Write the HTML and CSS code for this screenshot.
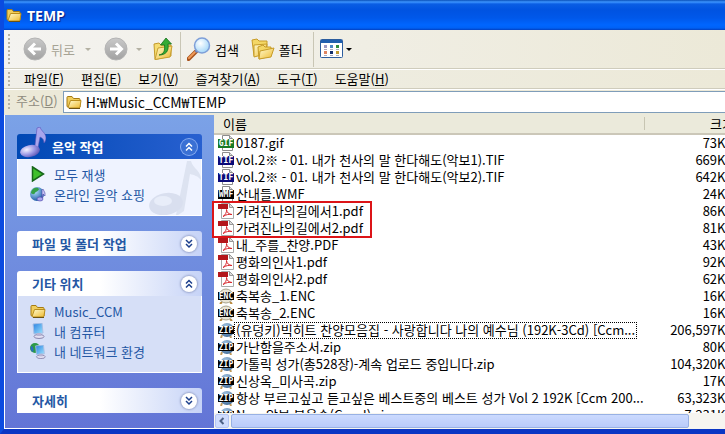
FILE: index.html
```
<!DOCTYPE html>
<html lang="ko">

<head>
    <meta charset="UTF-8">
    <meta name="viewport" content="width=device-width, initial-scale=1.0">
    <title>TEMP</title>
    <link rel="stylesheet" href="styles.css">
</head>

<body>
    <!-- icons -->
    <svg class="defs" width="0" height="0">
        <defs>
            <linearGradient id="gold" x1="0" y1="0" x2="1" y2="1">
                <stop offset="0" stop-color="#fffbd0" />
                <stop offset="1" stop-color="#eeb92e" />
            </linearGradient>
            <linearGradient id="screen" x1="0" y1="0" x2="1" y2="1">
                <stop offset="0" stop-color="#2a7fe0" />
                <stop offset="1" stop-color="#9be4ff" />
            </linearGradient>
            <radialGradient id="globe" cx=".35" cy=".3" r=".8">
                <stop offset="0" stop-color="#b8e4ff" />
                <stop offset="1" stop-color="#0c4c9c" />
            </radialGradient>
            <radialGradient id="zipball" cx=".4" cy=".3" r=".8">
                <stop offset="0" stop-color="#a9cbe8" />
                <stop offset="1" stop-color="#3a6592" />
            </radialGradient>
            <linearGradient id="gray" x1="0" y1="0" x2="0" y2="1">
                <stop offset="0" stop-color="#c9c9c9" />
                <stop offset="1" stop-color="#a2a2a2" />
            </linearGradient>
            <radialGradient id="lens" cx=".4" cy=".35" r=".7">
                <stop offset="0" stop-color="#ffffff" />
                <stop offset="1" stop-color="#9fd5f8" />
            </radialGradient>
            <radialGradient id="notehead" cx=".35" cy=".35" r=".8">
                <stop offset="0" stop-color="#f4f2ff" />
                <stop offset=".5" stop-color="#9c98e4" />
                <stop offset="1" stop-color="#4b45a8" />
            </radialGradient>
            <symbol id="folder" viewBox="0 0 16 16">
                <path d="M1 3.500Q1 2.500 2 2.500h4l1.500 2H13q1 0 1 1V13H2q-1 0-1-1z" fill="#f0cd5c" stroke="#a67b12" />
                <path d="M4.500 6.500H15L14 13q-.2 1-1 1H3q-1 0-.800-1z" fill="url(#gold)" stroke="#b98d1c" />
                <path d="M3 14.500h11" stroke="#6d5212" stroke-width="1" />
            </symbol>
            <symbol id="page" viewBox="0 0 16 16">
                <path d="M4.500.5h7l3 3v12h-10z" fill="#fff" stroke="#8c8c8c" />
                <path d="M11.500.5v3h3" fill="#ddd" stroke="#8c8c8c" />
            </symbol>
            <symbol id="gif" viewBox="0 0 16 16">
                <use href="#page" />
                <rect y="4" width="16" height="9" fill="#187a24" />
                <text x="8" y="11" class="tag">GIF</text>
            </symbol>
            <symbol id="tif" viewBox="0 0 16 16">
                <use href="#page" />
                <rect y="4" width="16" height="9" fill="#0a0a78" />
                <text x="8" y="11" class="tag">TIF</text>
            </symbol>
            <symbol id="wmf" viewBox="0 0 16 16">
                <use href="#page" />
                <rect y="4" width="16" height="9" fill="#000" />
                <text x="8" y="11" class="tag">WMF</text>
            </symbol>
            <symbol id="pdf" viewBox="0 0 16 16">
                <path d="M3.500.5h8l4 4v11h-12z" fill="#fff" stroke="#a9a9a9" />
                <path d="M11.500.5v4h4z" fill="#ddd" stroke="#999" />
                <rect y="1" width="10" height="5" fill="#b3161b" />
                <path d="M5 13.500c2-1 4-4.500 3.500-7 .3 3 2.500 5 5.500 5-3-.5-6 0-9 2z" fill="none" stroke="#d8262c" />
            </symbol>
            <symbol id="enc" viewBox="0 0 16 16">
                <path d="M4 14l-2 2M12 14l2 2" stroke="#b8873a" stroke-width="2" />
                <circle cx="8" cy="8" r="7" fill="#e9e4d4" stroke="#aaa48e" />
                <rect y="4" width="16" height="8" fill="#000" />
                <text x="8" y="11" class="tag">ENC</text>
            </symbol>
            <symbol id="zip" viewBox="0 0 16 16">
                <path d="M4 13l-1 3M12 13l1 3" stroke="#c29a5a" stroke-width="2" />
                <circle cx="9" cy="8" r="7" fill="url(#zipball)" />
                <rect y="4" width="16" height="8" fill="#000" />
                <text x="8" y="11" class="tag">ZIP</text>
            </symbol>
            <symbol id="down" viewBox="0 0 16 16">
                <path d="M5 4l3 3 3-3M5 8l3 3 3-3" fill="none" stroke="currentColor" stroke-width="1.500" />
            </symbol>
            <symbol id="up" viewBox="0 0 16 16">
                <path d="M5 7.500l3-3 3 3M5 11.500l3-3 3 3" fill="none" stroke="currentColor" stroke-width="1.500" />
            </symbol>
            <symbol id="note" viewBox="0 0 26 31">
                <path d="M17 1l3-1c1 4 6 6 6 11 0 2-1 4-2 5 0-4-2-5-4-6l-3 16-3 1z" fill="#a9a5ec" stroke="#5a54b8" stroke-width=".6" />
                <ellipse cx="10" cy="24" rx="10" ry="6" transform="rotate(-12 10 24)" fill="url(#notehead)" />
            </symbol>
            <symbol id="pc" viewBox="0 0 16 16">
                <path d="M3 1l9-1 1 10-9 1z" fill="url(#screen)" stroke="#a9bfe4" />
                <ellipse cx="9" cy="13.500" rx="5" ry="2" fill="#e3e1f4" stroke="#74709c" stroke-width=".8" />
                <path d="M7 10h4v3H7z" fill="#b7b4d4" />
            </symbol>
        </defs>
    </svg>

    <div class="window">
        <header class="title">
            <svg class="icon"><use href="#folder" /></svg>
            <h1>TEMP</h1>
        </header>

        <div class="toolbar">
            <i class="grip"></i>
            <button class="back" disabled>
                <svg width="24" height="24" viewBox="0 0 24 24">
                    <circle cx="12" cy="12" r="11" fill="url(#gray)" stroke="#b4b4b4" />
                    <path d="M18 12H7M12 6.500L6.500 12l5.500 5.500" fill="none" stroke="#fff" stroke-width="3" />
                </svg>
                뒤로
            </button>
            <i class="caret off"></i>
            <button class="next" disabled aria-label="앞으로">
                <svg width="24" height="24" viewBox="0 0 24 24">
                    <circle cx="12" cy="12" r="11" fill="url(#gray)" stroke="#b4b4b4" />
                    <path d="M6 12h11M12 6.500l5.500 5.500-5.500 5.500" fill="none" stroke="#fff" stroke-width="3" />
                </svg>
            </button>
            <i class="caret off"></i>
            <button class="parent" aria-label="위로">
                <svg width="20" height="24" viewBox="0 0 20 24">
                    <path d="M1 7l5-1 2 2h10v11L2 22.500z" fill="#f5dc72" stroke="#c39a2c" />
                    <path d="M5 11l14-2-2 11-15 2.500z" fill="url(#gold)" stroke="#c9a030" />
                    <path d="M6 18c5-1 6-4 5.500-10H7.500L13 1l5.500 6H15c1 7-2 11-9 11z" fill="#35ab35" stroke="#13701a" stroke-width=".8" />
                </svg>
            </button>
            <i class="line"></i>
            <button class="search">
                <svg width="24" height="24" viewBox="0 0 24 24">
                    <path d="M1.500 22L9 14.500" stroke="#a8521c" stroke-width="4" stroke-linecap="round" />
                    <path d="M2 21l6-6" stroke="#ef9a58" stroke-width="2" stroke-linecap="round" />
                    <path d="M8.500 15l2-2" stroke="#6d7fb0" stroke-width="3" />
                    <circle cx="15" cy="8.500" r="7.500" fill="url(#lens)" stroke="#7f9fd8" stroke-width="1.500" />
                </svg>
                검색
            </button>
            <button class="folders">
                <svg width="24" height="24" viewBox="0 0 24 24">
                    <path d="M1 3l5-1 2 2h8v12l-13 3z" fill="#f4d765" stroke="#c79c28" />
                    <path d="M3 8l13-1-2 10-11 3z" fill="url(#gold)" stroke="#c79c28" />
                    <path d="M7 10l5-2 2 2h6v9L8 22z" fill="#f4d765" stroke="#c79c28" />
                    <path d="M9 14l14-3-3 9-12 2z" fill="url(#gold)" stroke="#c79c28" />
                </svg>
                폴더
            </button>
            <i class="line"></i>
            <button class="views" aria-label="보기">
                <svg width="24" height="20" viewBox="0 0 24 20">
                    <rect x=".5" y=".5" width="22" height="18" rx="1" fill="#fff" stroke="#2c5d9e" />
                    <rect x="1" y="1" width="21" height="3" fill="#1f5fae" />
                    <rect x="4" y="6" width="3" height="3" fill="#9c9ac4" />
                    <rect x="10" y="6" width="3" height="3" fill="#4a86c4" />
                    <rect x="16" y="6" width="3" height="3" fill="#2f8c3c" />
                    <rect x="4" y="12" width="3" height="3" fill="#e08460" />
                    <rect x="10" y="12" width="3" height="3" fill="#14306e" />
                    <rect x="16" y="12" width="3" height="3" fill="#c09a30" />
                    <path d="M4 10.500h3m3 0h3m3 0h3M4 16.500h3m3 0h3m3 0h3" stroke="#aab" />
                </svg>
                <i class="caret"></i>
            </button>
        </div>

        <nav class="menu">
            <i class="grip"></i>
            <a href="#">파일(<u>F</u>)</a>
            <a href="#">편집(<u>E</u>)</a>
            <a href="#">보기(<u>V</u>)</a>
            <a href="#">즐겨찾기(<u>A</u>)</a>
            <a href="#">도구(<u>T</u>)</a>
            <a href="#">도움말(<u>H</u>)</a>
        </nav>

        <div class="address">
            <i class="grip"></i>
            <label for="path">주소(<u>D</u>)</label>
            <div class="field">
                <svg class="icon"><use href="#folder" /></svg>
                <input id="path" type="text" value="H:₩Music_CCM₩TEMP">
            </div>
        </div>

        <div class="main">
            <aside class="side">
                <section class="panel music">
                    <h2>
                        <svg class="note"><use href="#note" /></svg>
                        음악 작업
                        <button class="round" aria-label="접기"><svg class="icon"><use href="#up" /></svg></button>
                    </h2>
                    <ul>
                        <li><a href="#">
                                <svg class="icon" viewBox="0 0 16 16">
                                    <path d="M2.500 1l11 7-11 7z" fill="#3fbf2c" stroke="#17661a" stroke-width="1.500" />
                                </svg>
                                모두 재생</a></li>
                        <li><a href="#">
                                <svg class="icon" viewBox="0 0 16 16">
                                    <circle cx="7" cy="8" r="7" fill="url(#globe)" />
                                    <path d="M3 3c3-2 5-1 6 0-1 3-3 2-4 4s-3 1-4 0c0-2 1-3 2-4z" fill="#35a04a" />
                                    <path d="M12 4l1-1 2 4v3l-2-2-1 6z" fill="#c9c6f4" stroke="#4b45a8" stroke-width=".6" />
                                    <ellipse cx="10" cy="13" rx="3" ry="2" fill="#a9a5ec" stroke="#4b45a8" stroke-width=".6" />
                                </svg>
                                온라인 음악 쇼핑</a></li>
                    </ul>
                    <svg class="watermark" viewBox="0 0 52 54">
                        <path d="M38 0h4c2 8 10 9 10 19-3-4-7-5-11-6l-6 37-6 4h-2z" fill="#dde3f1" />
                        <ellipse cx="17" cy="43" rx="17" ry="11" transform="rotate(-10 17 43)" fill="#d9dfef" />
                        <ellipse cx="14" cy="40" rx="9" ry="5" fill="#e8edf9" />
                    </svg>
                </section>

                <section class="panel">
                    <h2>파일 및 폴더 작업
                        <button class="round" aria-label="펼치기"><svg class="icon"><use href="#down" /></svg></button>
                    </h2>
                </section>

                <section class="panel">
                    <h2>기타 위치
                        <button class="round" aria-label="접기"><svg class="icon"><use href="#up" /></svg></button>
                    </h2>
                    <ul>
                        <li><a href="#"><svg class="icon"><use href="#folder" /></svg>Music_CCM</a></li>
                        <li><a href="#"><svg class="icon"><use href="#pc" /></svg>내 컴퓨터</a></li>
                        <li><a href="#">
                                <svg class="icon" viewBox="0 0 16 16">
                                    <circle cx="5" cy="5" r="5" fill="#2c9a48" />
                                    <path d="M1 3c2 0 3 3 2 6-2-1-3-3-2-6z" fill="#2a6cc0" />
                                    <use href="#pc" x="3" y="2" width="14" height="14" />
                                </svg>
                                내 네트워크 환경</a></li>
                    </ul>
                </section>

                <section class="panel">
                    <h2>자세히
                        <button class="round" aria-label="펼치기"><svg class="icon"><use href="#down" /></svg></button>
                    </h2>
                </section>
            </aside>

            <div class="list">
                <div class="files">
                    <table>
                        <thead>
                            <tr>
                                <th>이름</th>
                                <th class="size">크기</th>
                            </tr>
                        </thead>
                        <tbody>
                            <tr>
                                <td><svg class="icon"><use href="#gif" /></svg><span>0187.gif</span></td>
                                <td class="size">73KB</td>
                            </tr>
                            <tr>
                                <td><svg class="icon"><use href="#tif" /></svg><span>vol.2※ - 01. 내가 천사의 말 한다해도(악보1).TIF</span></td>
                                <td class="size">669KB</td>
                            </tr>
                            <tr>
                                <td><svg class="icon"><use href="#tif" /></svg><span>vol.2※ - 01. 내가 천사의 말 한다해도(악보2).TIF</span></td>
                                <td class="size">642KB</td>
                            </tr>
                            <tr>
                                <td><svg class="icon"><use href="#wmf" /></svg><span>산내들.WMF</span></td>
                                <td class="size">24KB</td>
                            </tr>
                            <tr>
                                <td><svg class="icon"><use href="#pdf" /></svg><span>가려진나의길에서1.pdf</span></td>
                                <td class="size">86KB</td>
                            </tr>
                            <tr>
                                <td><svg class="icon"><use href="#pdf" /></svg><span>가려진나의길에서2.pdf</span></td>
                                <td class="size">81KB</td>
                            </tr>
                            <tr>
                                <td><svg class="icon"><use href="#pdf" /></svg><span>내_주를_찬양.PDF</span></td>
                                <td class="size">43KB</td>
                            </tr>
                            <tr>
                                <td><svg class="icon"><use href="#pdf" /></svg><span>평화의인사1.pdf</span></td>
                                <td class="size">92KB</td>
                            </tr>
                            <tr>
                                <td><svg class="icon"><use href="#pdf" /></svg><span>평화의인사2.pdf</span></td>
                                <td class="size">62KB</td>
                            </tr>
                            <tr>
                                <td><svg class="icon"><use href="#enc" /></svg><span>축복송_1.ENC</span></td>
                                <td class="size">16KB</td>
                            </tr>
                            <tr>
                                <td><svg class="icon"><use href="#enc" /></svg><span>축복송_2.ENC</span></td>
                                <td class="size">16KB</td>
                            </tr>
                            <tr class="focus">
                                <td><svg class="icon"><use href="#zip" /></svg><span>(유덩키)빅히트 찬양모음집 - 사랑합니다 나의 예수님 (192K-3Cd) [Ccm...</span></td>
                                <td class="size">206,597KB</td>
                            </tr>
                            <tr>
                                <td><svg class="icon"><use href="#zip" /></svg><span>가난함을주소서.zip</span></td>
                                <td class="size">80KB</td>
                            </tr>
                            <tr>
                                <td><svg class="icon"><use href="#zip" /></svg><span>가톨릭 성가(총528장)-계속 업로드 중입니다.zip</span></td>
                                <td class="size">104,320KB</td>
                            </tr>
                            <tr>
                                <td><svg class="icon"><use href="#zip" /></svg><span>신상옥_미사곡.zip</span></td>
                                <td class="size">17KB</td>
                            </tr>
                            <tr>
                                <td><svg class="icon"><use href="#zip" /></svg><span>항상 부르고싶고 듣고싶은 베스트중의 베스트 성가 Vol 2 192K [Ccm 200...</span></td>
                                <td class="size">63,323KB</td>
                            </tr>
                            <tr>
                                <td><svg class="icon"><use href="#zip" /></svg><span>Nwc 악보 부음슴(Good).zip</span></td>
                                <td class="size">7,231KB</td>
                            </tr>
                        </tbody>
                    </table>
                </div>
                <div class="scroll">
                    <button aria-label="왼쪽"><svg width="8" height="8" viewBox="0 0 8 8">
                            <path d="M5.500 1l-3 3 3 3" fill="none" stroke="#4d6185" stroke-width="2" />
                        </svg></button>
                    <div class="thumb"></div>
                </div>
                <div class="mark"></div>
            </div>
        </div>
    </div>
</body>

</html>
```
FILE: styles.css
```
* {
    margin: 0;
    padding: 0;
    box-sizing: border-box;
}

body {
    font: 13px/17px "Noto Sans CJK KR", sans-serif;
    color: #000;
}

ul {
    list-style: none;
}

a {
    color: inherit;
    text-decoration: none;
}

button {
    font: inherit;
    color: inherit;
    border: 0;
    background: none;
}

.defs {
    position: absolute;
}

.icon {
    display: block;
    flex: none;
    width: 16px;
    height: 16px;
}

.tag {
    font: bold 8px "DejaVu Sans Mono", monospace;
    fill: #fff;
    text-anchor: middle;
}

.window {
    display: flex;
    flex-direction: column;
    height: 100vh;
    border-left: 4px solid #0b4be0;
    border-bottom: 5px solid #0a36c4;
    background: #ece9d8;
    overflow: hidden;
}

/* title bar */
.title {
    display: flex;
    align-items: center;
    flex: none;
    gap: 5px;
    height: 30px;
    margin-left: -4px;
    padding-left: 6px;
    background: linear-gradient(#0a50b8 0, #3d95ff 2px, #0a5ee4 4px, #0053e1 10px, #0058ea 18px, #0066ff 25px, #0061f5 28px, #0340c0 30px);
}

.title h1 {
    font: bold 14px/17px "Noto Sans", sans-serif;
    color: #fff;
    text-shadow: 1px 1px 1px #0a1e80;
}

/* bars */
.toolbar,
.menu,
.address {
    display: flex;
    align-items: center;
    flex: none;
    padding-left: 4px;
}

.toolbar {
    height: 39px;
    border-bottom: 1px solid #cfccbc;
    background: linear-gradient(90deg, #f4f3f0, #ece9d8);
}

.toolbar button {
    display: flex;
    align-items: center;
    gap: 4px;
}

.grip {
    flex: none;
    width: 2px;
    height: 14px;
    background: repeating-linear-gradient(#b5b2a4 0, #b5b2a4 2px, transparent 2px, transparent 4px);
}

.toolbar .grip {
    height: 30px;
}

.caret {
    border: 3px solid transparent;
    border-top-color: #000;
    border-bottom: 0;
}

.caret.off {
    border-top-color: #b4b1a3;
}

.line {
    width: 1px;
    height: 35px;
    background: #c9c6b5;
}

.toolbar .back {
    margin: 0 10px 0 13px;
    color: #a6a395;
}

.toolbar .next {
    margin: 0 8px 0 13px;
}

.toolbar .parent {
    margin: 0 7px 0 11px;
}

.toolbar .search {
    margin: 0 12px 0 6px;
}

.toolbar .folders {
    margin-right: 10px;
}

.toolbar .views {
    gap: 2px;
    margin-left: 6px;
}

.menu {
    gap: 17px;
    height: 20px;
    border-top: 1px solid #fff;
    border-bottom: 1px solid #cfccbc;
    background: linear-gradient(90deg, #f0efe8, #ece9d8);
}

.menu .grip {
    margin-right: -3px;
}

.menu a {
    padding-bottom: 2px;
}

.address {
    gap: 5px;
    height: 24px;
    border-top: 1px solid #fff;
}

.address .grip {
    margin-right: 1px;
}

.address label {
    padding-bottom: 2px;
    color: #8f8c7e;
}

.field {
    display: flex;
    align-items: center;
    flex: 1;
    gap: 4px;
    height: 22px;
    padding-left: 2px;
    border: 1px solid #7f9db9;
    border-right: 0;
    background: #fff;
}

.field input {
    flex: 1;
    min-width: 0;
    height: 20px;
    border: 0;
    outline: 0;
    font: inherit;
    font-size: 14px;
    background: none;
}

/* body */
.main {
    display: flex;
    flex: 1;
    min-height: 0;
}

.side {
    display: flex;
    flex-direction: column;
    flex: none;
    gap: 15px;
    width: 210px;
    margin-top: 2px;
    padding: 19px 12px 0;
    border: solid #fff;
    border-width: 0 0 1px 1px;
    background: linear-gradient(#7ba2e7, #6375d6);
}

.panel {
    position: relative;
    color: #2457a4;
}

.panel h2 {
    display: flex;
    align-items: center;
    justify-content: space-between;
    height: 25px;
    padding: 0 5px 0 15px;
    border-radius: 3px 3px 0 0;
    font-size: 13px;
    background: linear-gradient(90deg, #fff 45%, #c6d3f7);
}

.panel ul {
    padding: 5px 12px 11px;
    border: 1px solid #fff;
    border-top: 0;
    background: #d6dff7;
}

.panel li a {
    display: flex;
    align-items: center;
    gap: 8px;
    height: 20px;
}

.round {
    display: flex;
    align-items: center;
    justify-content: center;
    width: 16px;
    height: 16px;
    border-radius: 50%;
    background: #fff;
    box-shadow: 0 0 2px 1px #9aa6cc;
    color: #1c3f8c;
}

.music h2 {
    padding-left: 35px;
    color: #fff;
    background: linear-gradient(90deg, #0048b4, #2860d0);
}

.music ul {
    background: #eff3ff;
}

.music .round {
    background: #3a70d4;
    box-shadow: 0 0 0 1px #86abf0;
    color: #fff;
}

.note {
    position: absolute;
    left: 3px;
    top: -7px;
    width: 26px;
    height: 31px;
}

.watermark {
    position: absolute;
    right: 1px;
    bottom: 1px;
    width: 52px;
    height: 54px;
}

.music li {
    position: relative;
    z-index: 1;
}

/* file list */
.list {
    position: relative;
    display: flex;
    flex-direction: column;
    flex: 1;
    min-width: 0;
}

.files {
    flex: 1;
    overflow: hidden;
    background: #fff;
}

/* the size column runs past the right edge */
table {
    width: calc(100% + 9px);
    table-layout: fixed;
    border-spacing: 0;
}

th {
    height: 22px;
    padding-left: 9px;
    font-weight: normal;
    text-align: left;
    background: #ebeadb;
    border-bottom: 2px solid #cbc7b8;
}

th.size {
    background: linear-gradient(#c7c5b2, #c7c5b2) 0 4px / 1px 13px no-repeat #ebeadb;
}

td {
    height: 17px;
    padding-left: 4px;
    line-height: 15px;
    vertical-align: top;
    white-space: nowrap;
}

td .icon {
    display: inline-block;
    vertical-align: top;
}

td span {
    display: inline-block;
    height: 17px;
    padding: 0 2px;
    vertical-align: top;
}

.focus span {
    outline: 1px dotted #000;
    outline-offset: -1px;
}

.size {
    width: 90px;
    padding-left: 0;
    text-align: right;
}

.mark {
    position: absolute;
    left: -2px;
    top: 88px;
    width: 160px;
    height: 37px;
    border: 2px solid #dc1418;
}

.scroll {
    display: flex;
    flex: none;
    gap: 2px;
    height: 16px;
    padding: 1px;
    background: #f6f5f0;
}

.scroll button {
    display: flex;
    align-items: center;
    justify-content: center;
    width: 14px;
    border: 1px solid #b4c6f4;
    border-radius: 2px;
    background: #cfdcfd;
}

.thumb {
    width: 90%;
    border: 1px solid #98b1e4;
    border-radius: 2px;
    background: linear-gradient(#cbdafe, #b9cbfa);
}
```
